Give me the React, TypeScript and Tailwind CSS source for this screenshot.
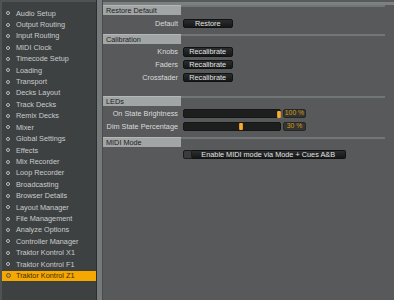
import React from "react";

const items = [
  "Audio Setup",
  "Output Routing",
  "Input Routing",
  "MIDI Clock",
  "Timecode Setup",
  "Loading",
  "Transport",
  "Decks Layout",
  "Track Decks",
  "Remix Decks",
  "Mixer",
  "Global Settings",
  "Effects",
  "Mix Recorder",
  "Loop Recorder",
  "Broadcasting",
  "Browser Details",
  "Layout Manager",
  "File Management",
  "Analyze Options",
  "Controller Manager",
  "Traktor Kontrol X1",
  "Traktor Kontrol F1",
  "Traktor Kontrol Z1",
];

function SectionHeader({ title, className = "" }: { title: string; className?: string }) {
  return (
    <div className={"flex items-start pr-[9px] " + className}>
      <div className="w-[78px] h-[10px] bg-[#a1a5a5] border-t border-[#b4b8b8] pl-[3px] text-[7.3px] leading-[9px] text-[#1e2020] whitespace-nowrap">
        {title}
      </div>
      <div className="flex-1 h-[2px] bg-[#717676]" />
    </div>
  );
}

function Btn({ label }: { label: string }) {
  return (
    <div className="w-[50px] h-[9.4px] rounded-[2px] bg-gradient-to-b from-[#2c2d2e] to-[#161717] border border-[#111212] flex items-center justify-center text-[7.3px] leading-none text-[#e2e4e4] whitespace-nowrap">
      {label}
    </div>
  );
}

function Row({ label, children, className = "" }: { label: string; children: React.ReactNode; className?: string }) {
  return (
    <div className={"flex items-center " + className}>
      <div className="w-[75px] text-right text-[7.3px] leading-none text-[#d9dbdb] whitespace-nowrap">{label}</div>
      <div className="ml-[4.7px] flex items-center">{children}</div>
    </div>
  );
}

function Slider({ thumb, value }: { thumb: number; value: string }) {
  return (
    <div className="flex items-center">
      <div className="relative w-[98px] h-[9.3px] rounded-[2px] bg-[#1d1f1f] border border-[#151616]">
        <div
          className="absolute top-[0.5px] w-[4px] h-[7px] rounded-[1px] bg-gradient-to-r from-[#e08a10] via-[#ffb838] to-[#e08a10]"
          style={{ left: thumb }}
        />
      </div>
      <div className="ml-[2.3px] w-[23px] h-[9.3px] rounded-[2px] bg-[#343430] border border-[#262624] flex items-center justify-center text-[6.8px] leading-none text-[#d49b1e] whitespace-nowrap">
        {value}
      </div>
    </div>
  );
}

export default function App() {
  return (
    <div
      className="w-[394px] h-[300px] bg-[#58595a] flex overflow-hidden"
      style={{ fontFamily: '"Liberation Sans", Arial, sans-serif' }}
    >
      {/* Sidebar */}
      <div className="w-[96px] h-full bg-[#505354] pl-[2px] pt-[2px] flex">
        <div className="flex-1 h-full bg-[#3e4142] pt-[5.6px] flex flex-col">
          {items.map((it, i) => {
            const sel = i === items.length - 1;
            return (
              <div
                key={it}
                className={
                  "h-[10px] my-[0.715px] flex items-center pl-[4px] " +
                  (sel ? "bg-[#f6a800]" : "")
                }
              >
                {sel ? (
                  <div className="w-[5px] h-[5px] rounded-full border border-[#6b5a2c] bg-[#c89a30] -ml-[0.5px] mr-[5.5px]" />
                ) : (
                  <div className="w-[4px] h-[4px] rounded-full border border-[#b9bdbd] bg-[#3e4142] mr-[6px]" />
                )}
                <span
                  className={
                    "text-[7.3px] leading-none whitespace-nowrap " +
                    (sel ? "text-[#3a2c08]" : "text-[#c9cccc]")
                  }
                >
                  {it}
                </span>
              </div>
            );
          })}
        </div>
      </div>
      <div className="w-[1px] h-full bg-[#2c2e2f]" />
      <div className="w-[5px] h-full bg-[#767a7a]" />
      <div className="w-[1px] h-full bg-[#484b4b]" />

      {/* Content */}
      <div className="flex-1 h-full flex flex-col pt-[2px]">
        <div className="h-[3px] bg-[#7b8080]" />

        <SectionHeader title="Restore Default" />
        <Row label="Default" className="mt-[4px]">
          <Btn label="Restore" />
        </Row>

        <SectionHeader title="Calibration" className="mt-[5.5px]" />
        <Row label="Knobs" className="mt-[3.3px]">
          <Btn label="Recalibrate" />
        </Row>
        <Row label="Faders" className="mt-[3.3px]">
          <Btn label="Recalibrate" />
        </Row>
        <Row label="Crossfader" className="mt-[3.3px]">
          <Btn label="Recalibrate" />
        </Row>

        <SectionHeader title="LEDs" className="mt-[13.9px]" />
        <Row label="On State Brightness" className="mt-[3.3px]">
          <Slider thumb={93} value="100 %" />
        </Row>
        <Row label="Dim State Percentage" className="mt-[3.1px]">
          <Slider thumb={55.5} value="30 %" />
        </Row>

        <SectionHeader title="MIDI Mode" className="mt-[6px]" />
        <div className="flex items-center mt-[3px] pl-[79.7px]">
          <div className="w-[9px] h-[9.5px] rounded-l-[2px] bg-[#3a3b3b] border border-[#1a1b1b]" />
          <div className="w-[154px] h-[9.5px] rounded-r-[2px] bg-gradient-to-b from-[#2c2d2e] to-[#161717] border border-[#111212] border-l-0 flex items-center justify-center text-[7.3px] leading-none text-[#e2e4e4] whitespace-nowrap">
            Enable MIDI mode via Mode + Cues A&amp;B
          </div>
        </div>
      </div>
    </div>
  );
}
